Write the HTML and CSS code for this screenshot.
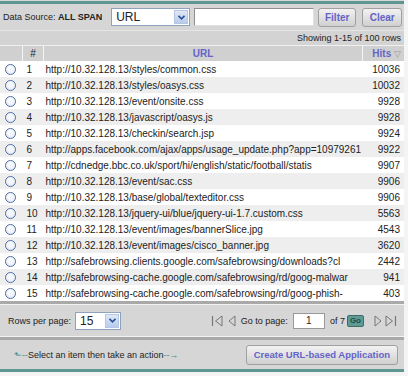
FILE: index.html
```html
<!DOCTYPE html>
<html lang="en">
<head>
  <meta charset="UTF-8" />
  <title>URL Hits</title>
  <link rel="stylesheet" href="styles.css">
</head>
<body>
  <div class="panel">
    <div class="top-rule"></div>

    <div class="toolbar">
      <span class="label">Data Source: <b>ALL SPAN</b></span>
      <div class="select wide">
        <span>URL</span>
        <span class="drop"><svg width="7" height="5" viewBox="0 0 7 5"><path d="M0.5 0.8 L3.5 3.8 L6.5 0.8" fill="none" stroke="#2a4f9a" stroke-width="1.6"/></svg></span>
      </div>
      <div class="text-input"></div>
      <button class="btn filter">Filter</button>
      <button class="btn clear">Clear</button>
    </div>

    <div class="status">Showing 1-15 of 100 rows</div>

    <table class="grid">
      <thead>
        <tr>
          <th class="c-radio"></th>
          <th class="c-num">#</th>
          <th class="c-url link">URL</th>
          <th class="c-hits link">Hits <span class="sort">&#9661;</span></th>
        </tr>
      </thead>
      <tbody id="rows"></tbody>
    </table>

    <div class="band"></div>
    <div class="pager">
      <span class="label">Rows per page:</span>
      <div class="select small">
        <span>15</span>
        <span class="drop"><svg width="7" height="5" viewBox="0 0 7 5"><path d="M0.5 0.8 L3.5 3.8 L6.5 0.8" fill="none" stroke="#2a4f9a" stroke-width="1.6"/></svg></span>
      </div>
      <div class="nav">
        <svg class="first" width="12" height="12" viewBox="0 0 12 12"><path d="M1.5 1 V11" stroke="#777" stroke-width="1.2"/><path d="M11 1 L4.5 6 L11 11 Z" fill="none" stroke="#777" stroke-width="1"/></svg>
        <svg class="prev" width="8" height="12" viewBox="0 0 8 12"><path d="M7 1 L1 6 L7 11 Z" fill="none" stroke="#777" stroke-width="1"/></svg>
        <span class="goto">Go to page:</span>
        <div class="page-input">1</div>
        <span class="of">of 7</span>
        <span class="go">Go</span>
        <svg class="next" width="8" height="12" viewBox="0 0 8 12"><path d="M1 1 L7 6 L1 11 Z" fill="none" stroke="#777" stroke-width="1"/></svg>
        <svg class="last" width="12" height="12" viewBox="0 0 12 12"><path d="M1 1 L7.5 6 L1 11 Z" fill="none" stroke="#777" stroke-width="1"/><path d="M10.5 1 V11" stroke="#777" stroke-width="1.2"/></svg>
      </div>
    </div>
    <div class="band"></div>

    <div class="actions">
      <span class="hint"><span class="arrow">&#11025;--</span>Select an item then take an action<span class="arrow">--&#8594;</span></span>
      <button class="btn big">Create URL-based Application</button>
    </div>
    <div class="bottom-rule"></div>
  </div>

  <script>
    const data = [
      ['http://10.32.128.13/styles/common.css', 10036],
      ['http://10.32.128.13/styles/oasys.css', 10032],
      ['http://10.32.128.13/event/onsite.css', 9928],
      ['http://10.32.128.13/javascript/oasys.js', 9928],
      ['http://10.32.128.13/checkin/search.jsp', 9924],
      ['http://apps.facebook.com/ajax/apps/usage_update.php?app=10979261', 9922],
      ['http://cdnedge.bbc.co.uk/sport/hi/english/static/football/statis', 9907],
      ['http://10.32.128.13/event/sac.css', 9906],
      ['http://10.32.128.13/base/global/texteditor.css', 9906],
      ['http://10.32.128.13/jquery-ui/blue/jquery-ui-1.7.custom.css', 5563],
      ['http://10.32.128.13/event/images/bannerSlice.jpg', 4543],
      ['http://10.32.128.13/event/images/cisco_banner.jpg', 3620],
      ['http://safebrowsing.clients.google.com/safebrowsing/downloads?cl', 2442],
      ['http://safebrowsing-cache.google.com/safebrowsing/rd/goog-malwar', 941],
      ['http://safebrowsing-cache.google.com/safebrowsing/rd/goog-phish-', 403]
    ];
    const body = document.getElementById('rows');
    data.forEach((row, i) => {
      const tr = document.createElement('tr');
      tr.innerHTML = `
        <td class="c-radio"><span class="radio"></span></td>
        <td class="c-num">${i + 1}</td>
        <td class="c-url">${row[0]}</td>
        <td class="c-hits">${row[1]}</td>`;
      body.appendChild(tr);
    });
  </script>
</body>
</html>
```

FILE: styles.css
```css
body {
  margin: 0;
  background: #f4f4f4;
  font-family: "Liberation Sans", Arial, sans-serif;
  font-size: 10px;
  color: #222;
}

.panel {
  width: 404px;
  padding-top: 1px;
  background: #d6d6d6;
}

.top-rule,
.bottom-rule {
  height: 3px;
  background: #5e9691;
}

.toolbar {
  display: flex;
  align-items: center;
  height: 26px;
  padding: 0 4px 0 3px;
  border-bottom: 1px solid #e6e6e6;
  white-space: nowrap;
}

.label {
  flex: none;
  white-space: nowrap;
  font-size: 9px;
}

.select {
  flex: none;
  display: flex;
  align-items: center;
  justify-content: space-between;
  height: 16px;
  background: #fff;
  border: 1px solid #8fa2bd;
  font-size: 12px;
  padding-left: 4px;
  box-sizing: content-box;
}

.select.wide {
  width: 73px;
  margin-left: 9px;
}

.select.small {
  width: 40px;
  margin-left: 4px;
}

.drop {
  display: flex;
  align-items: center;
  justify-content: center;
  width: 14px;
  height: 14px;
  margin-right: 1px;
  background: linear-gradient(#dfe8f6, #b9cbeb);
  border: 1px solid #b5c6e4;
  box-sizing: border-box;
}

.text-input {
  flex: none;
  width: 118px;
  height: 16px;
  margin-left: 4px;
  background: #fff;
  border: 1px solid #8f8f8f;
  border-right-color: #e0e0e0;
  border-bottom-color: #e0e0e0;
}

.btn {
  flex: none;
  height: 19px;
  padding: 0;
  font-family: "Liberation Sans", Arial, sans-serif;
  font-size: 10px;
  font-weight: bold;
  color: #6464c8;
  background: linear-gradient(#f2f2f2, #d0d0d0);
  border: 1px solid #a0a0a0;
  border-radius: 3px;
}

.btn.filter {
  width: 38px;
  margin-left: 4px;
}

.btn.clear {
  width: 40px;
  margin-left: 6px;
}

.status {
  height: 14px;
  line-height: 14px;
  text-align: right;
  padding-right: 3px;
  font-size: 9px;
  background: #d3d3d3;
  border-bottom: 1px solid #f0f0f0;
}

.grid {
  width: 100%;
  border-collapse: collapse;
  table-layout: fixed;
}

.grid th {
  height: 15px;
  padding: 0;
  background: #d0d0d0;
  border-left: 1px solid #f4f4f4;
  font-weight: normal;
  text-align: center;
}

.grid th:first-child {
  border-left: none;
}

.grid th.link {
  color: #6464c8;
  font-weight: bold;
}

.grid th.c-hits {
  text-align: right;
  padding-right: 3px;
}

.sort {
  color: #999;
  font-weight: normal;
  font-size: 9px;
}

.grid td {
  height: 16px;
  padding: 0;
  white-space: nowrap;
  overflow: hidden;
}

.grid tbody tr:nth-child(odd) {
  background: #fff;
}

.grid tbody tr:nth-child(even) {
  background: #eeeeee;
}

.c-radio {
  width: 22px;
}

.c-num {
  width: 20px;
}

.c-hits {
  width: 38px;
}

.grid td.c-num {
  padding-left: 4px;
}

.grid td.c-url {
  padding-left: 2px;
}

.grid td.c-hits {
  text-align: right;
  padding-right: 4px;
}

.radio {
  display: block;
  width: 9px;
  height: 9px;
  margin-left: 5px;
  border: 1px solid #4a6ea8;
  border-radius: 50%;
  background: radial-gradient(circle at 50% 35%, #fff, #e2e8f2);
}

.band {
  height: 3px;
  background: #a9a9a9;
  border-bottom: 1px solid #f2f2f2;
}

.pager + .band {
  border-top: 1px solid #f2f2f2;
  border-bottom: none;
}

.pager {
  display: flex;
  align-items: center;
  height: 31px;
  padding: 0 7px 0 8px;
}

.nav {
  display: flex;
  align-items: center;
  margin-left: auto;
}

.nav .prev {
  margin-left: 5px;
}

.goto {
  font-size: 9px;
  margin-left: 5px;
}

.page-input {
  width: 30px;
  height: 14px;
  margin-left: 5px;
  background: #fff;
  border: 1px solid #999;
  line-height: 13px;
  text-align: center;
}

.of {
  font-size: 9px;
  margin-left: 5px;
}

.go {
  display: inline-block;
  padding: 0 2px;
  height: 10px;
  line-height: 10px;
  font-size: 8px;
  font-weight: bold;
  color: #1c4f4a;
  background: #5e9a94;
  border: 1px solid #3e6c68;
  border-radius: 2px;
  margin-left: 2px;
}

.nav .next {
  margin-left: 10px;
}

.nav .last {
  margin-left: 3px;
}

.actions {
  display: flex;
  align-items: center;
  justify-content: space-between;
  height: 29px;
  padding: 0 6px 0 14px;
}

.hint {
  font-size: 9px;
}

.hint .arrow {
  color: #4b8c86;
}

.btn.big {
  height: 20px;
  padding: 0 7px;
  font-size: 9.5px;
}
```
